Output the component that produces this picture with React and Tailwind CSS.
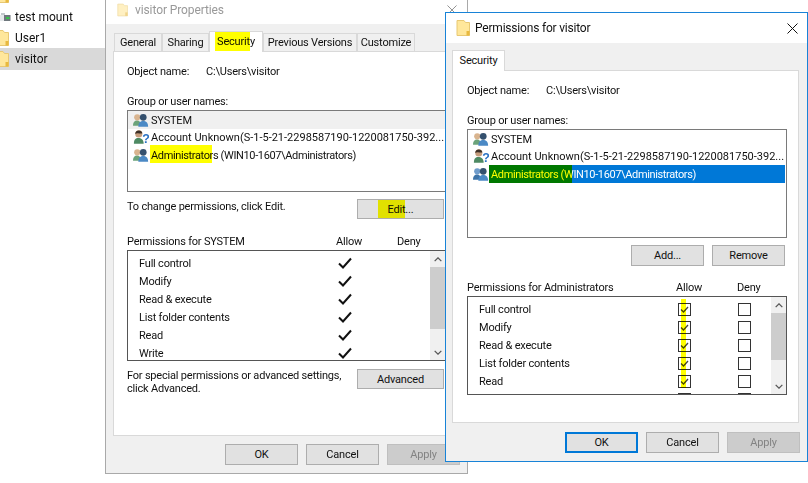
import React from 'react';

const perms = ['Full control', 'Modify', 'Read & execute', 'List folder contents', 'Read', 'Write'];

const FolderIcon = ({ className }) => (
  <svg viewBox="0 0 14 16" className={className}>
    <path d="M1 .5h7l1.5 2H13.500v13H1z" fill="#ffe79b" stroke="#e8c873" />
    <path d="M10.500 11h3v4.500h-3z" fill="#e8b93f" />
  </svg>
);

const UserIcon = ({ kind }) => {
  if (kind === 'unknown') {
    return (
      <svg viewBox="0 0 18 17" className="w-[16px] h-[16px] shrink-0">
        <path d="M1 16c0-5 2-6.500 5-6.500s6 1.500 6 6.500z" fill="#4e8a63" />
        <circle cx="6.500" cy="5" r="4" fill="#c69c7c" />
        <path d="M2.500 5c0-5 8-5 8-.5-2 .5-6-1-8 .5z" fill="#3b3028" />
        <text x="10.500" y="15" fontSize="14" fontWeight="700" fill="#2a72c4" fontFamily="Liberation Sans, sans-serif">?</text>
      </svg>
    );
  }
  const left = kind === 'selected' ? '#3d73a8' : '#6ba37a';
  const leftHead = kind === 'selected' ? '#6f9ccb' : '#d9b48f';
  return (
    <svg viewBox="0 0 18 17" className="w-[16px] h-[16px] shrink-0">
      <path d="M0 15c0-4.500 2-6 4.500-6S9 10.500 9 15z" fill={left} />
      <circle cx="4.800" cy="5.500" r="3.500" fill={leftHead} />
      <path d="M6 16c0-5 2.500-6.500 5.500-6.500S17 11 17 16z" fill="#4b89c5" />
      <circle cx="11.500" cy="5.500" r="3.800" fill="#34506e" />
    </svg>
  );
};

const Check = () => (
  <svg viewBox="0 0 14 12" className="w-[14px] h-[12px] shrink-0">
    <path d="M1 6.500l4 4L13 1.500" fill="none" stroke="#111" strokeWidth="2" />
  </svg>
);

const CheckBox = ({ checked }) => (
  <span className="flex items-center justify-center w-[13px] h-[13px] border border-[#333333] bg-white shrink-0">
    {checked && (
      <svg viewBox="0 0 11 11" className="w-[11px] h-[11px]">
        <path d="M2 5.500l2.500 2.500L9 3" fill="none" stroke="#444" strokeWidth="1.300" />
      </svg>
    )}
  </span>
);

const Close = ({ className, color }) => (
  <svg viewBox="0 0 11 11" className={className}>
    <path d="M.5.5l10 10M10.500.5l-10 10" stroke={color} strokeWidth="1" />
  </svg>
);

const Btn = ({ children, variant, className = 'w-[73px] h-[21px]' }) => {
  let look = 'border border-[#adadad] bg-[#e1e1e1] text-[#111111]';
  if (variant === 'default') look = 'border-2 border-[#0078d7] bg-[#e1e1e1] text-[#111111]';
  if (variant === 'disabled') look = 'border border-[#bfbfbf] bg-[#cccccc] text-[#838383]';
  return (
    <div className={`relative flex items-center justify-center pt-[2px] shrink-0 ${look} ${className}`}>
      {children}
    </div>
  );
};

const Scrollbar = ({ thumbHeight }) => (
  <div className="flex flex-col w-[15px] shrink-0 bg-[#f0f0f0]">
    <div className="flex items-center justify-center h-[16px] shrink-0">
      <svg viewBox="0 0 9 6" className="w-[8px] h-[5px]"><path d="M.5 5l4-4 4 4" fill="none" stroke="#555" strokeWidth="1.500" /></svg>
    </div>
    <div className="flex-1">
      <div className={`bg-[#cdcdcd] ${thumbHeight}`} />
    </div>
    <div className="flex items-center justify-center h-[16px] shrink-0">
      <svg viewBox="0 0 9 6" className="w-[8px] h-[5px]"><path d="M.5 1l4 4 4-4" fill="none" stroke="#555" strokeWidth="1.500" /></svg>
    </div>
  </div>
);

const PermHeader = ({ title }) => (
  <div className="flex h-[14px] items-center pt-[2px]">
    <span className="w-[209px] shrink-0">{title}</span>
    <span className="w-[61px] shrink-0">Allow</span>
    <span>Deny</span>
  </div>
);

const Tab = ({ children, active, highlight, width }) => (
  <div
    className={
      active
        ? `relative z-10 flex items-center justify-center h-[21px] -mb-px border border-b-0 border-[#d9d9d9] bg-white ${width}`
        : `relative flex items-center justify-center h-[18px] pt-[2px] border border-b-0 border-[#d9d9d9] bg-[#f0f0f0] ${width}`
    }
  >
    {children}
    {highlight}
  </div>
);

const GroupRow = ({ kind, children, rowClass = '' }) => (
  <div className={`flex items-center h-[17.5px] pl-[5px] ${rowClass}`}>
    <UserIcon kind={kind} />
    {children}
  </div>
);

const Marker = ({ className }) => (
  <span className={`absolute bg-[#ffff00] mix-blend-multiply ${className}`} />
);

export default function App() {
  return (
    <div
      className="relative w-[808px] h-[483px] overflow-hidden bg-white text-[#111111] text-[11px] tracking-[-0.2px]"
      style={{ fontFamily: 'Roboto, sans-serif' }}
    >
      {/* Explorer tree */}
      <div className="absolute left-0 top-0 w-[105px] h-full overflow-hidden text-[12px] tracking-normal">
        <div className="h-[7px] overflow-hidden relative">
          <FolderIcon className="absolute -left-[5px] -top-[13px] w-[14px] h-[16px]" />
        </div>
        <div className="flex items-center h-[20px]">
          <svg viewBox="0 0 11 9" className="w-[11px] h-[9px] shrink-0 mr-[4px]">
            <path d="M0 2h10.500v6H0z" fill="#6f777d" />
            <path d="M0 2h4v6H0z" fill="#e4e8ea" />
            <path d="M1 0h4v2H1z" fill="#c3c9cd" />
            <path d="M6 4h3.500v2H6z" fill="#37c44a" />
          </svg>
          <span>test mount</span>
        </div>
        <div className="flex items-center h-[21px] overflow-hidden">
          <FolderIcon className="-ml-[5px] w-[14px] h-[16px] shrink-0 mr-[6px]" />
          <span>User1</span>
        </div>
        <div className="flex items-center h-[22px] bg-[#d9d9d9] overflow-hidden">
          <FolderIcon className="-ml-[5px] w-[14px] h-[16px] shrink-0 mr-[6px]" />
          <span>visitor</span>
        </div>
      </div>

      {/* visitor Properties */}
      <div className="absolute left-[105px] top-0 w-[363px] h-[474px] flex flex-col border-x border-b border-[#a9a9a9]">
        <div className="flex items-center h-[24px] pb-[4px] bg-white shrink-0">
          <FolderIcon className="ml-[11px] w-[11px] h-[14px] opacity-60" />
          <span className="ml-[7px] text-[12px] text-[#999999] tracking-[-0.1px]">visitor Properties</span>
          <Close className="ml-auto mr-[10px] w-[10px] h-[10px]" color="#888888" />
        </div>
        <div className="flex-1 bg-[#f0f0f0] px-[7px]">
          <div className="flex items-end h-[27px] pl-[1px]">
            <Tab width="w-[48px]">General</Tab>
            <Tab width="w-[47px]">Sharing</Tab>
            <Tab active width="w-[54px]" highlight={<Marker className="left-[5px] top-0 w-[35px] h-[19px]" />}>Security</Tab>
            <Tab width="w-[94px]">Previous Versions</Tab>
            <Tab width="w-[58px]">Customize</Tab>
          </div>
          <div className="w-[347px] h-[385px] border border-[#d9d9d9] bg-white pl-[13px] pt-[12px]">
            <div className="flex h-[14px] items-center pt-[2px]">
              <span className="w-[79px]">Object name:</span>
              <span>C:\Users\visitor</span>
            </div>
            <div className="flex h-[14px] items-center pt-[2px] mt-[16px]">Group or user names:</div>
            <div className="mt-[2px] w-[319px] h-[82px] border border-[#7a7a7a] bg-white">
              <GroupRow kind="system" rowClass="bg-[#f0f0f0]">
                <span className="ml-[2px] pt-[2px]">SYSTEM</span>
              </GroupRow>
              <GroupRow kind="unknown">
                <span className="ml-[2px] pt-[2px] tracking-normal whitespace-nowrap">Account Unknown(S-1-5-21-2298587190-1220081750-392...</span>
              </GroupRow>
              <GroupRow kind="system">
                <span className="relative ml-[2px] pt-[2px] tracking-[-0.37px] whitespace-nowrap">
                  Administrators (WIN10-1607\Administrators)
                  <Marker className="-left-[1px] -top-[1px] w-[62px] h-[18px]" />
                </span>
              </GroupRow>
            </div>
            <div className="flex justify-between w-[317px] mt-[7px] h-[20px]">
              <span>To change permissions, click Edit.</span>
              <Btn className="w-[87px] h-[20px]">
                Edit...
                <Marker className="left-[20px] top-0 w-[27px] h-[18px]" />
              </Btn>
            </div>
            <div className="mt-[15px]">
              <PermHeader title="Permissions for SYSTEM" />
            </div>
            <div className="flex mt-[2px] w-[319px] h-[111px] border border-[#555555] bg-white">
              <div className="flex-1 pt-[3px] overflow-hidden">
                {perms.map((p) => (
                  <div key={p} className="flex items-center h-[18px] pl-[11px]">
                    <span className="w-[199px] shrink-0 pt-[2px]">{p}</span>
                    <Check />
                  </div>
                ))}
              </div>
              <Scrollbar thumbHeight="h-[62px]" />
            </div>
            <div className="flex justify-between w-[317px] mt-[8px]">
              <span className="leading-[13px]">
                For special permissions or advanced settings,
                <br />
                click Advanced.
              </span>
              <Btn className="w-[87px] h-[20px]">Advanced</Btn>
            </div>
          </div>
          <div className="flex gap-[8px] mt-[8px] ml-[112px]">
            <Btn>OK</Btn>
            <Btn>Cancel</Btn>
            <Btn variant="disabled">Apply</Btn>
          </div>
        </div>
      </div>

      {/* Permissions for visitor */}
      <div className="absolute left-[445px] top-[12px] w-[363px] h-[450px] flex flex-col border border-[#1883d7] z-20 bg-[#f0f0f0]">
        <div className="flex items-center h-[30px] bg-white shrink-0">
          <FolderIcon className="ml-[10px] w-[14px] h-[16px]" />
          <span className="ml-[5px] text-[12px]">Permissions for visitor</span>
          <Close className="ml-auto mr-[9px] w-[11px] h-[11px]" color="#111111" />
        </div>
        <div className="flex-1 px-[6px]">
          <div className="flex items-end h-[27px]">
            <Tab active width="w-[53px]">Security</Tab>
          </div>
          <div className="w-[347px] h-[353px] border border-[#d9d9d9] bg-white pl-[14px] pt-[12px]">
            <div className="flex h-[14px] items-center pt-[2px]">
              <span className="w-[79px]">Object name:</span>
              <span>C:\Users\visitor</span>
            </div>
            <div className="flex h-[14px] items-center pt-[2px] mt-[16px]">Group or user names:</div>
            <div className="mt-[2px] w-[320px] h-[109px] border border-[#7a7a7a] bg-white">
              <GroupRow kind="system">
                <span className="ml-[2px] pt-[2px]">SYSTEM</span>
              </GroupRow>
              <GroupRow kind="unknown">
                <span className="ml-[2px] pt-[2px] tracking-normal whitespace-nowrap">Account Unknown(S-1-5-21-2298587190-1220081750-392...</span>
              </GroupRow>
              <div className="flex items-center h-[17.5px] pl-[5px]">
                <UserIcon kind="selected" />
                <div className="relative flex items-center h-full w-[296px] pl-[2px] pt-[2px] bg-[#0078d7] text-white tracking-[-0.37px] whitespace-nowrap">
                  Administrators (WIN10-1607\Administrators)
                  <Marker className="left-0 top-0 w-[83px] h-full" />
                </div>
              </div>
            </div>
            <div className="flex gap-[8px] mt-[7px] ml-[164px]">
              <Btn>Add...</Btn>
              <Btn>Remove</Btn>
            </div>
            <div className="mt-[14px]">
              <PermHeader title="Permissions for Administrators" />
            </div>
            <div className="flex mt-[2px] w-[320px] h-[99px] border border-[#555555] bg-white">
              <div className="relative flex-1 pt-[3px] overflow-hidden">
                {perms.map((p, i) => (
                  <div key={p} className="flex items-center h-[18px] pl-[11px]">
                    {/* the Write label sits below the visible part of the list */}
                    <span className="w-[199px] shrink-0 pt-[2px]">{i < 5 ? p : ''}</span>
                    <CheckBox checked />
                    <span className="ml-[47px]">
                      <CheckBox />
                    </span>
                  </div>
                ))}
                <Marker className="left-[213px] top-[2px] w-[5px] h-[89px]" />
              </div>
              <Scrollbar thumbHeight="h-[47px]" />
            </div>
          </div>
          <div className="flex gap-[8px] mt-[9px] ml-[113px]">
            <Btn variant="default">OK</Btn>
            <Btn>Cancel</Btn>
            <Btn variant="disabled">Apply</Btn>
          </div>
        </div>
      </div>
    </div>
  );
}
